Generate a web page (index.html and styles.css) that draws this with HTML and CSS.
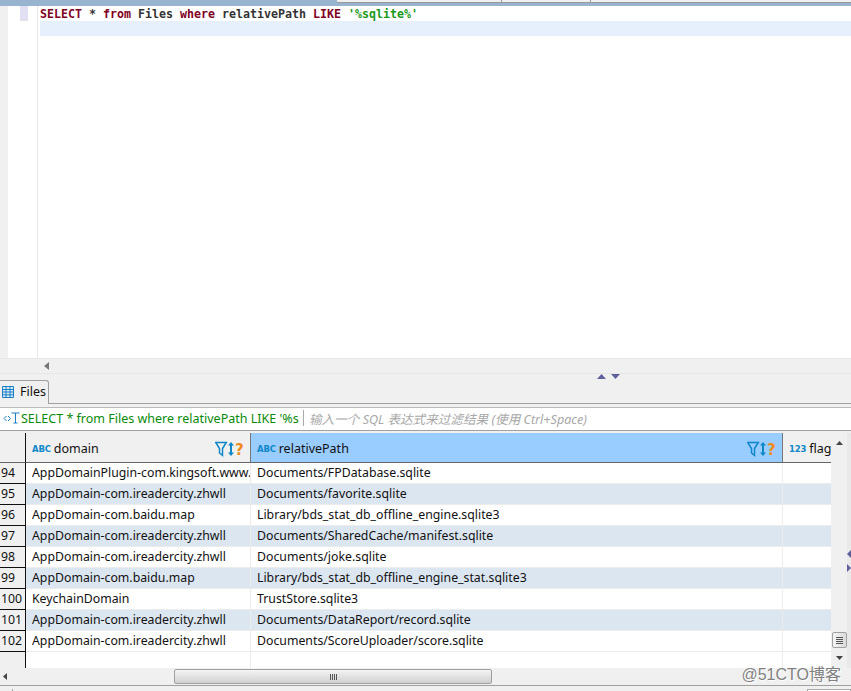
FILE: index.html
```html
<!DOCTYPE html>
<html lang="zh-CN">
<head>
  <meta charset="UTF-8" />
  <title>Files</title>
  <link rel="stylesheet" href="styles.css">
</head>
<body>

  <!-- tabs above the editor, only their lower edge is visible -->
  <div class="top-tabs">
    <div class="top-tab top-tab-active"></div>
    <div class="top-tab top-tab-a"></div>
    <div class="top-tab top-tab-b"></div>
    <div class="top-tab top-tab-c"></div>
  </div>

  <!-- SQL editor -->
  <div class="editor">
    <div class="editor-margin"></div>
    <div class="editor-ruler"><div class="ruler-mark"></div></div>
    <div class="editor-text">
      <div class="code-line"><span class="kw">SELECT</span> * <span class="kw">from</span> Files <span class="kw">where</span> relativePath <span class="kw">LIKE</span> <span class="str">'%sqlite%'</span></div>
      <div class="code-line code-line-current"></div>
    </div>
  </div>
  <div class="editor-scroll">
    <svg class="arrow-left" width="6" height="8" viewBox="0 0 6 8"><path d="M5 0v8L0 4z" fill="#777"/></svg>
  </div>

  <!-- sash between editor and results -->
  <div class="sash">
    <svg width="9" height="5" viewBox="0 0 9 5"><path d="M4.5 0L9 5H0z" fill="#5f5f9e"/></svg>
    <svg width="9" height="5" viewBox="0 0 9 5"><path d="M0 0h9L4.5 5z" fill="#5f5f9e"/></svg>
  </div>

  <!-- results tab -->
  <div class="result-tabs">
    <div class="result-tab">
      <svg width="12" height="12" viewBox="0 0 12 12">
        <path d="M.5.5h11v11H.5zM.5 3.500h11M.5 6h11M.5 8.800h11M4 .5v11M8 .5v11" fill="#d8ecfa" stroke="#1a7fc4"/>
      </svg>
      <span>Files</span>
    </div>
  </div>

  <!-- filter bar -->
  <div class="filter-bar">
    <svg class="filter-icon" width="17" height="12" viewBox="0 0 17 12">
      <path d="M3.500 4L1 6.500 3.500 9M5 4l2.500 2.500L5 9" fill="none" stroke="#1a7fc4"/>
      <path d="M8.500 1h8M12.500 1v10M10.500 11h4" fill="none" stroke="#1a7fc4"/>
    </svg>
    <div class="filter-sql">SELECT * from Files where relativePath LIKE '%sqlite%'</div>
    <div class="filter-sep"></div>
    <div class="filter-hint">输入一个 SQL 表达式来过滤结果 (使用 Ctrl+Space)</div>
  </div>

  <!-- result grid -->
  <div class="grid-area">
    <div class="grid-main">
      <div class="grid-wrap">
        <table class="grid">
          <colgroup>
            <col class="col-num"><col class="col-domain"><col class="col-path"><col class="col-flag">
          </colgroup>
          <thead>
            <tr>
              <th class="num"></th>
              <th>
                <div class="head">
                  <span class="type">ABC</span><span class="head-name">domain</span>
                  <svg class="head-icons" width="31" height="18" viewBox="0 0 31 18">
                    <path d="M.7 2.500h10.600L7.500 8.500v7l-3-2.500V8.500z" fill="none" stroke="#0f87c8" stroke-width="1.500"/>
                    <path d="M16 2l3 3.500h-2v7h2L16 16l-3-3.500h2v-7h-2z" fill="#0f87c8"/>
                    <text x="20" y="15" class="help">?</text>
                  </svg>
                </div>
              </th>
              <th class="sel">
                <div class="head">
                  <span class="type">ABC</span><span class="head-name">relativePath</span>
                  <svg class="head-icons" width="31" height="18" viewBox="0 0 31 18">
                    <path d="M.7 2.500h10.600L7.500 8.500v7l-3-2.500V8.500z" fill="none" stroke="#0f87c8" stroke-width="1.500"/>
                    <path d="M16 2l3 3.500h-2v7h2L16 16l-3-3.500h2v-7h-2z" fill="#0f87c8"/>
                    <text x="20" y="15" class="help">?</text>
                  </svg>
                </div>
              </th>
              <th>
                <div class="head head-flag"><span class="type">123</span><span class="head-name">flag</span></div>
              </th>
            </tr>
          </thead>
          <tbody>
            <tr><td class="num">94</td><td>AppDomainPlugin-com.kingsoft.www..</td><td>Documents/FPDatabase.sqlite</td><td></td></tr>
            <tr class="alt"><td class="num">95</td><td>AppDomain-com.ireadercity.zhwll</td><td>Documents/favorite.sqlite</td><td></td></tr>
            <tr><td class="num">96</td><td>AppDomain-com.baidu.map</td><td>Library/bds_stat_db_offline_engine.sqlite3</td><td></td></tr>
            <tr class="alt"><td class="num">97</td><td>AppDomain-com.ireadercity.zhwll</td><td>Documents/SharedCache/manifest.sqlite</td><td></td></tr>
            <tr><td class="num">98</td><td>AppDomain-com.ireadercity.zhwll</td><td>Documents/joke.sqlite</td><td></td></tr>
            <tr class="alt"><td class="num">99</td><td>AppDomain-com.baidu.map</td><td>Library/bds_stat_db_offline_engine_stat.sqlite3</td><td></td></tr>
            <tr><td class="num">100</td><td>KeychainDomain</td><td>TrustStore.sqlite3</td><td></td></tr>
            <tr class="alt"><td class="num">101</td><td>AppDomain-com.ireadercity.zhwll</td><td>Documents/DataReport/record.sqlite</td><td></td></tr>
            <tr><td class="num">102</td><td>AppDomain-com.ireadercity.zhwll</td><td>Documents/ScoreUploader/score.sqlite</td><td></td></tr>
            <tr class="rest"><td class="num"></td><td></td><td></td><td></td></tr>
          </tbody>
        </table>
      </div>
      <div class="vscroll">
        <svg width="7" height="4" viewBox="0 0 7 4"><path d="M3.500 0L7 4H0z" fill="#444"/></svg>
        <div class="vscroll-track"></div>
        <div class="vscroll-thumb"><span></span><span></span><span></span><span></span></div>
        <svg width="7" height="4" viewBox="0 0 7 4"><path d="M0 0h7L3.500 4z" fill="#444"/></svg>
      </div>
      <div class="side-strip"></div>
    </div>

    <div class="hscroll">
      <svg class="arrow-left" width="4" height="7" viewBox="0 0 4 7"><path d="M4 0v7L0 3.500z" fill="#444"/></svg>
      <div class="hscroll-thumb"><span></span><span></span><span></span><span></span></div>
    </div>
  </div>

  <div class="status-bar">
    <div class="status-a"></div>
    <div class="status-b"></div>
  </div>

  <!-- collapse arrows on the right edge -->
  <svg class="edge-arrow edge-arrow-up" width="4" height="8" viewBox="0 0 4 8"><path d="M4 0v8L0 4z" fill="#5f5f9e"/></svg>
  <svg class="edge-arrow edge-arrow-down" width="4" height="8" viewBox="0 0 4 8"><path d="M0 0l4 4-4 4z" fill="#5f5f9e"/></svg>

  <div class="watermark">@51CTO博客</div>

</body>
</html>
```

FILE: styles.css
```css
* {
  box-sizing: border-box;
}

html, body {
  margin: 0;
  height: 100%;
}

body {
  position: relative;
  display: flex;
  flex-direction: column;
  width: 851px;
  height: 691px;
  overflow: hidden;
  background-color: #f0f0f0;
  font-family: "Noto Sans", "Noto Sans CJK SC", sans-serif;
  font-size: 12.3px;
  color: #111;
}

/* top tabs */
.top-tabs {
  display: flex;
  height: 6px;
  flex: none;
  border-bottom: 3px solid #99b4d1;
}

.top-tab {
  height: 3px;
  background-color: #f0f0f0;
  border-bottom: 1px solid #999;
  border-right: 1px solid #999;
}

.top-tab-active {
  width: 337px;
  background-color: #99b4d1;
  border: 0;
}

.top-tab-a {
  width: 165px;
}

.top-tab-b {
  width: 89px;
}

.top-tab-c {
  flex: 1;
  border-right: 0;
}

/* editor */
.editor {
  display: flex;
  height: 352px;
  flex: none;
  background-color: #fff;
}

.editor-margin {
  width: 8px;
  background-color: #f0f0f0;
}

.editor-ruler {
  width: 30px;
  border-right: 1px solid #e8e8e8;
}

.ruler-mark {
  width: 8px;
  height: 15px;
  margin-left: 12px;
  background-color: #e0e0f2;
}

.editor-text {
  flex: 1;
  margin-left: 2px;
  font-family: "DejaVu Sans Mono", monospace;
  font-size: 11.63px;
  font-weight: bold;
  color: #333;
}

.code-line {
  height: 15px;
  line-height: 16px;
  white-space: pre;
}

.code-line-current {
  background-color: #e6f0fc;
}

.kw {
  color: #7f0022;
}

.str {
  color: #1a9a1a;
}

.editor-scroll {
  display: flex;
  align-items: center;
  height: 16px;
  flex: none;
  padding-left: 44px;
  border-top: 1px solid #e6e6e6;
  border-bottom: 1px solid #e6e6e6;
}

/* sash */
.sash {
  display: flex;
  justify-content: center;
  align-items: flex-start;
  gap: 5px;
  height: 6px;
  flex: none;
  padding-left: 365px;
}

/* result tab */
.result-tabs {
  display: flex;
  height: 24px;
  flex: none;
  border-bottom: 1px solid #a0a0a0;
}

.result-tab {
  display: flex;
  align-items: center;
  gap: 6px;
  width: 49px;
  height: 24px;
  padding: 0 0 2px 2px;
  background-color: #f0f0f0;
  border-top: 1px solid #a0a0a0;
  border-right: 1px solid #a0a0a0;
  border-top-right-radius: 3px;
  font-size: 12.5px;
}

/* filter bar */
.filter-bar {
  display: flex;
  align-items: center;
  height: 24px;
  flex: none;
  margin-top: 3px;
  padding: 0 0 2px 3px;
  background-color: #fff;
  border-top: 1px solid #bbb;
  border-bottom: 1px solid #a0a0a0;
}

.filter-icon {
  flex: none;
}

.filter-sql {
  width: 278px;
  margin-left: 1px;
  overflow: hidden;
  white-space: nowrap;
  font-size: 12.5px;
  color: #0a8a0a;
}

.filter-sep {
  width: 1px;
  height: 16px;
  margin: 0 5px 0 4px;
  background-color: #aaa;
}

.filter-hint {
  font-size: 12.6px;
  font-style: italic;
  color: #a8a8a8;
  white-space: nowrap;
}

/* grid */
.grid-area {
  display: flex;
  flex-direction: column;
  height: 252px;
  flex: none;
  margin-top: 2px;
}

.grid-main {
  display: flex;
  height: 235px;
  flex: none;
}

.grid-wrap {
  width: 831px;
  flex: none;
  overflow: hidden;
}

.grid {
  width: 831px;
  height: 235px;
  table-layout: fixed;
  border-collapse: separate;
  border-spacing: 0;
  background-color: #fff;
}

.col-num {
  width: 26px;
}

.col-domain {
  width: 225px;
}

.col-path {
  width: 532px;
}

.col-flag {
  width: 48px;
}

.grid th {
  height: 30px;
  padding: 0;
  background-color: #f0f0f0;
  border-right: 1px solid #777;
  border-bottom: 1px solid #666;
  font-weight: normal;
  text-align: left;
}

.grid th:last-child {
  border-right: 0;
}

.grid th.sel {
  background-color: #99ccff;
}

.grid th.num {
  border-right: 1px solid #111;
}

.head {
  display: flex;
  align-items: center;
  height: 29px;
  padding: 2px 4px 0 6px;
}

.head-flag {
  overflow: hidden;
  white-space: nowrap;
}

.type {
  margin-right: 3px;
  font-family: "DejaVu Sans", sans-serif;
  font-size: 8.5px;
  font-weight: bold;
  letter-spacing: -0.2px;
  color: #0f87c8;
}

.head-name {
  font-size: 12.5px;
}

.head-icons {
  margin-left: auto;
}

.help {
  font-family: "DejaVu Sans", sans-serif;
  font-size: 15px;
  font-weight: bold;
  fill: #f08a1d;
}

.grid td {
  height: 21px;
  padding: 0 0 1px 6px;
  overflow: hidden;
  white-space: nowrap;
  border-right: 1px solid #ececec;
  border-bottom: 1px solid #ececec;
}

.grid td:last-child {
  border-right: 0;
}

.grid td.num {
  padding: 0 0 1px 1px;
  background-color: #f0f0f0;
  border-right: 1px solid #111;
  border-bottom: 1px solid #111;
}

.grid tr.alt td:not(.num) {
  background-color: #dce6f1;
}

.grid tr.rest td {
  height: 16px;
  border-bottom: 0;
}

/* scrollbars */
.vscroll {
  display: flex;
  flex-direction: column;
  align-items: center;
  width: 16px;
  flex: none;
  padding: 8px 0 8px;
  background-color: #f0f0f0;
}

.vscroll-track {
  flex: 1;
}

.vscroll-thumb,
.hscroll-thumb {
  display: flex;
  justify-content: center;
  align-items: center;
  background: linear-gradient(to right, #f4f4f4, #dcdcdc);
  border: 1px solid #a0a0a0;
  border-radius: 2px;
}

.vscroll-thumb {
  flex-direction: column;
  gap: 1px;
  width: 15px;
  height: 16px;
  margin-bottom: 8px;
}

.vscroll-thumb span {
  width: 7px;
  height: 1px;
  background-color: #555;
}

.side-strip {
  flex: 1;
  background-color: #e9e9e9;
}

.hscroll {
  display: flex;
  align-items: center;
  height: 17px;
  flex: none;
  padding-left: 3px;
  background-color: #f0f0f0;
}

.hscroll-thumb {
  gap: 1px;
  width: 318px;
  height: 15px;
  margin-left: 167px;
  background: linear-gradient(to bottom, #f4f4f4, #d0d0d0);
}

.hscroll-thumb span {
  width: 1px;
  height: 6px;
  background-color: #555;
}

.status-bar {
  display: flex;
  flex: 1;
  border-top: 1px solid #a0a0a0;
}

.status-a {
  width: 13px;
  margin-top: 3px;
  border-right: 1px solid #aaa;
}

.status-b {
  width: 44px;
  height: 3px;
  margin: 3px 0 0 auto;
  background-color: #fff;
  border: 1px solid #aaa;
}

/* overlays */
.edge-arrow {
  position: absolute;
  right: 0;
}

.edge-arrow-up {
  top: 550px;
}

.edge-arrow-down {
  top: 564px;
}

.watermark {
  position: absolute;
  top: 661px;
  right: 10px;
  font-family: "Liberation Sans", "Noto Sans CJK SC", sans-serif;
  font-size: 16px;
  color: #808080;
  text-shadow: 0 0 1px #fff, 1px 1px 1px #fff;
}
```
